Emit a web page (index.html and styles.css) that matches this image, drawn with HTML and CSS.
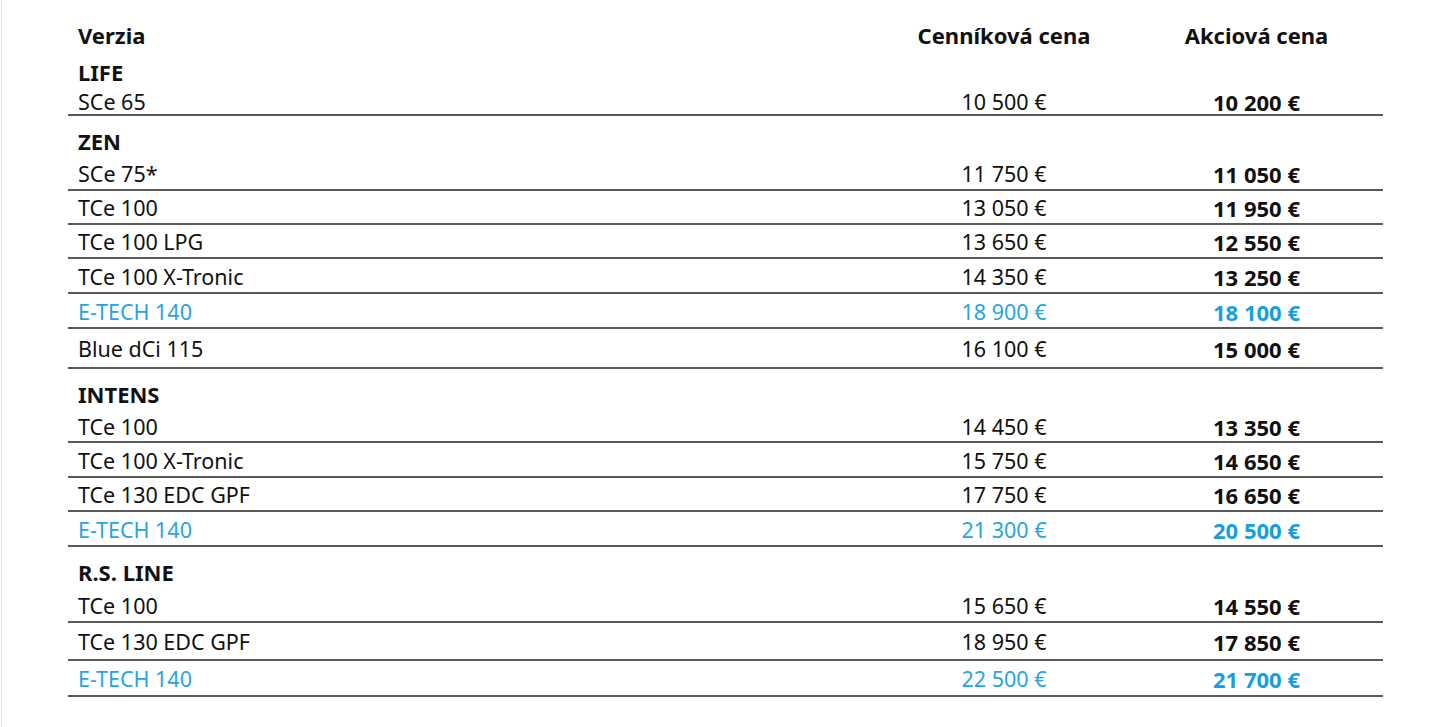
FILE: index.html
```html
<!DOCTYPE html>
<html lang="sk">
<head>
<meta charset="utf-8">
<title>Cenník</title>
<link rel="stylesheet" href="styles.css">
</head>
<body>
<div class="page">
  <div class="table">
    <div class="row head">
      <div class="name">Verzia</div>
      <div class="price">Cenníková cena</div>
      <div class="price">Akciová cena</div>
    </div>

    <div class="row title first"><div class="name">LIFE</div></div>
    <div class="row item r28"><div class="name">SCe 65</div><div class="price">10 500 €</div><div class="price promo">10 200 €</div></div>

    <div class="row title"><div class="name">ZEN</div></div>
    <div class="row item"><div class="name">SCe 75*</div><div class="price">11 750 €</div><div class="price promo">11 050 €</div></div>
    <div class="row item"><div class="name">TCe 100</div><div class="price">13 050 €</div><div class="price promo">11 950 €</div></div>
    <div class="row item"><div class="name">TCe 100 LPG</div><div class="price">13 650 €</div><div class="price promo">12 550 €</div></div>
    <div class="row item r35"><div class="name">TCe 100 X-Tronic</div><div class="price">14 350 €</div><div class="price promo">13 250 €</div></div>
    <div class="row item r35 etech"><div class="name">E-TECH 140</div><div class="price">18 900 €</div><div class="price promo">18 100 €</div></div>
    <div class="row item r40"><div class="name">Blue dCi 115</div><div class="price">16 100 €</div><div class="price promo">15 000 €</div></div>

    <div class="row title"><div class="name">INTENS</div></div>
    <div class="row item r33"><div class="name">TCe 100</div><div class="price">14 450 €</div><div class="price promo">13 350 €</div></div>
    <div class="row item r35"><div class="name">TCe 100 X-Tronic</div><div class="price">15 750 €</div><div class="price promo">14 650 €</div></div>
    <div class="row item"><div class="name">TCe 130 EDC GPF</div><div class="price">17 750 €</div><div class="price promo">16 650 €</div></div>
    <div class="row item r35 etech"><div class="name">E-TECH 140</div><div class="price">21 300 €</div><div class="price promo">20 500 €</div></div>

    <div class="row title"><div class="name">R.S. LINE</div></div>
    <div class="row item r35"><div class="name">TCe 100</div><div class="price">15 650 €</div><div class="price promo">14 550 €</div></div>
    <div class="row item r38"><div class="name">TCe 130 EDC GPF</div><div class="price">18 950 €</div><div class="price promo">17 850 €</div></div>
    <div class="row item r36 etech"><div class="name">E-TECH 140</div><div class="price">22 500 €</div><div class="price promo">21 700 €</div></div>
  </div>
</div>
</body>
</html>
```

FILE: styles.css
```css
html, body {
  margin: 0;
  padding: 0;
  background: #ffffff;
}

body {
  font-family: "Noto Sans", "Open Sans", sans-serif;
  color: #111111;
  font-size: 21.5px;
}

.page {
  margin-left: 1px;
  border-left: 1px solid #e2e2e2;
  height: 727px;
  box-sizing: border-box;
  padding-left: 66px;
  overflow: hidden;
}

.table {
  width: 1315px;
}

.row {
  display: grid;
  grid-template-columns: 810px 252px 253px;
  align-items: center;
  box-sizing: border-box;
  line-height: 24px;
}

.name {
  padding-left: 10px;
}

.price {
  text-align: center;
}

.head {
  height: 47px;
  padding-top: 24px;
  font-weight: 700;
  font-size: 22px;
  line-height: 22px;
  align-items: start;
}

.title {
  height: 41px;
  padding-top: 9px;
  font-weight: 700;
  font-size: 22px;
}

.item {
  height: 34px;
  padding-top: 2px;
  border-bottom: 2px solid #5a5a5a;
}

.r28 { height: 28px; }
.r33 { height: 33px; }
.r35 { height: 35px; }
.r36 { height: 36px; }
.r38 { height: 38px; }
.r40 { height: 40px; }

.promo {
  font-weight: 700;
  font-size: 22px;
}

.etech {
  color: #27a5e3;
}

.etech .promo {
  color: #139fe2;
}
```
